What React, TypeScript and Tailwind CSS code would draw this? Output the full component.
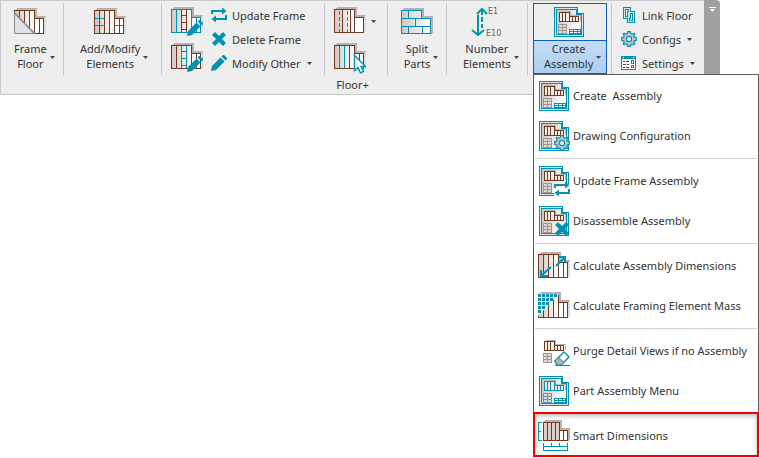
import React from 'react';
import clsx from 'clsx';

const TEAL = '#0091b3';
const BROWN = '#743a20';
const GREY = '#b3b3b3';

type IconProps = { className?: string };

function Defs() {
  return (
    <svg width="0" height="0" className="absolute" aria-hidden="true">
      <defs>
        <linearGradient id="wood" x1="0" y1="0" x2="1" y2="0">
          <stop offset="0" stopColor="#d3c6c1" />
          <stop offset="1" stopColor="#ffffff" />
        </linearGradient>
        <linearGradient id="paper" x1="0" y1="0.3" x2="1" y2="0.7">
          <stop offset="0" stopColor="#c6c6c6" />
          <stop offset="0.8" stopColor="#fafafa" />
        </linearGradient>
      </defs>
    </svg>
  );
}

function Caret({ className }: IconProps) {
  return (
    <svg width="5" height="3" viewBox="0 0 5 3" className={clsx('shrink-0', className)} aria-hidden="true">
      <path d="M0 0h5L2.5 3z" fill="#444" />
    </svg>
  );
}

// Small glyphs, all drawn in a 16x16 box so they can be reused as overlays
function PencilGlyph() {
  return (
    <g fill={TEAL}>
      <path d="M0 16l1-5 8.5-8.5 4 4L5 15z" />
      <path d="M10.5 1.5L12 0h1l3 3v1l-1.5 1.5z" />
    </g>
  );
}

function SwapGlyph() {
  return (
    <g fill="none" stroke={TEAL} strokeWidth="2">
      <path d="M1 7V4h12M15 8v4H3" />
      <path d="M11 .5v7L15.5 4zM5 8.500v7L.5 12z" fill={TEAL} stroke="none" />
    </g>
  );
}

function CrossGlyph() {
  return <path d="M4 1l4 4 4-4 3 3-4 4 4 4-3 3-4-4-4 4-3-3 4-4-4-4z" fill={TEAL} />;
}

function GearGlyph() {
  return (
    <g stroke={TEAL} strokeWidth="1.2">
      <path
        d="M6.7.7L9.3.7 9.8 2.6 11.2 3.2 12.9 2.2 13.8 3.1 12.8 4.8 13.4 6.2 15.3 6.7 15.3 9.3 13.4 9.8 12.8 11.2 13.8 12.9 12.9 13.8 11.2 12.8 9.8 13.4 9.3 15.3 6.7 15.3 6.2 13.4 4.8 12.8 3.1 13.8 2.2 12.9 3.2 11.2 2.6 9.8.7 9.3.7 6.7 2.6 6.2 3.2 4.8 2.2 3.1 3.1 2.2 4.8 3.2 6.2 2.6z"
        fill="#c4c4c4"
      />
      <circle cx="8" cy="8" r="2.6" fill="#fff" />
    </g>
  );
}

function SmallIcon({ children }: { children: React.ReactNode }) {
  return (
    <svg width="16" height="16" viewBox="0 0 16 16" className="shrink-0" aria-hidden="true">
      {children}
    </svg>
  );
}

function LinkGlyph() {
  return (
    <g fill="none" shapeRendering="crispEdges">
      <path d="M3.5 1.5h5v9h-5zM7.5 5.500h5v9h-5z" stroke={TEAL} strokeWidth="3" />
      <path d="M3.5 1.5h5v9h-5zM7.5 5.500h5v9h-5z" stroke="#d4e4e8" strokeWidth="1" />
    </g>
  );
}

function PanelGlyph() {
  return (
    <g fill="none" shapeRendering="crispEdges">
      <path d="M.5 1.5h14v13H.5z" fill="#fff" stroke={TEAL} />
      <path d="M0 1h15v3H0z" fill={TEAL} />
      <path d="M2 2h1v1H2zM12 2h1v1h-1z" fill="#fff" />
      <path d="M2 6.5h2M5 6.5h3M2 9.5h3M6 9.5h2M2 12.5h2M5 12.5h3" stroke={BROWN} />
      <path d="M10.5 5.5h2v3h-2zM10.5 10.5h2v2h-2z" stroke={TEAL} />
    </g>
  );
}

// Floor cassette seen from the front with a grey edge behind it
function FloorShape({
  stroke = BROWN,
  studs = 'M5.5 2v24M10.5 2v24M15.5 2v24M25.5 10v16',
  children,
}: {
  stroke?: string;
  studs?: string;
  children?: React.ReactNode;
}) {
  return (
    <g shapeRendering="crispEdges">
      <path d="M3 0h20v8h9l-2 2h-9V2H1z" fill={GREY} />
      <path d="M30 10l2-2v16l-2 2z" fill="#dcdcdc" />
      <path d="M.5 2.5h20v23H.5z" fill="url(#wood)" stroke={stroke} />
      <path d="M20.5 10.5h9v15h-9z" fill="#fff" stroke={stroke} />
      <path d={studs} stroke={stroke} fill="none" />
      {children}
    </g>
  );
}

function FloorIcon({ height = 28, children }: { height?: number; children: React.ReactNode }) {
  return (
    <svg
      width="32"
      height={height}
      viewBox={`0 0 32 ${height}`}
      className="block shrink-0"
      aria-hidden="true"
    >
      {children}
    </svg>
  );
}

function FrameFloorIcon() {
  return (
    <FloorIcon>
      <FloorShape />
      <path d="M0 4v22h21z" fill="#e0e1e3" />
      <path d="M.5 5v20.5H20z" fill="none" stroke="#888" />
      <path d="M0 4.5L20.5 25.5" stroke="#888" strokeWidth="1.5" />
    </FloorIcon>
  );
}

function AddElementsIcon() {
  return (
    <FloorIcon>
      <FloorShape>
        <path d="M1 10.5h4M6 10.5h4M1 17.5h4M6 17.5h4M21 17.5h4M26 17.5h3" stroke={TEAL} />
      </FloorShape>
    </FloorIcon>
  );
}

function EditFrameIcon() {
  return (
    <FloorIcon height={31}>
      <FloorShape stroke={TEAL} studs="M5.5 2v24M10.5 2v24M25.5 10v16">
        <path d="M10.5 3v22M15.5 3v22M11 8.5h4M11 15.5h4M11 22.5h4" stroke={BROWN} />
      </FloorShape>
      <g transform="translate(16 13)">
        <PencilGlyph />
      </g>
    </FloorIcon>
  );
}

function EditPartIcon() {
  return (
    <FloorIcon height={31}>
      <FloorShape studs="M5.5 2v24M25.5 10v16">
        <path d="M10.5 3v22M15.5 3v22M11 8.5h4M11 15.5h4M11 22.5h4" stroke={TEAL} />
      </FloorShape>
      <g transform="translate(16 13)">
        <PencilGlyph />
      </g>
    </FloorIcon>
  );
}

function CenterLinesIcon() {
  return (
    <FloorIcon>
      <FloorShape studs="M8.500 2v24M16.5 2v24">
        <path d="M5.5 4v21M13.5 4v21" stroke={TEAL} strokeDasharray="4 2" />
      </FloorShape>
    </FloorIcon>
  );
}

function PickStudIcon() {
  return (
    <FloorIcon height={31}>
      <FloorShape studs="M15.5 2v24M25.5 10v16">
        <path d="M5.5 3v22M10.5 3v22" stroke={TEAL} />
      </FloorShape>
      <path
        d="M20.5 12.5v15l3.5-3 2.5 5.5 3-1.5-2.5-5h4.5z"
        fill="#fff"
        stroke={TEAL}
        strokeWidth="1.4"
      />
    </FloorIcon>
  );
}

// Same outline as the floor, laid out as three courses of bricks
function SplitPartsIcon() {
  return (
    <FloorIcon>
      <g shapeRendering="crispEdges" stroke={TEAL}>
        <path d="M3 0h20v8h9v16l-2 2V10h-9V2H1z" fill={GREY} stroke="none" />
        <path d="M.5 2.5h20v8h9v15H.5z" fill="url(#wood)" />
        <path d="M0 10.5h21M0 18.5h30M7.5 2v8M14.5 10v8M7.5 18v8M21.5 18v8" fill="none" />
      </g>
    </FloorIcon>
  );
}

function NumberIcon() {
  return (
    <svg width="32" height="28" viewBox="0 0 32 28" className="block overflow-visible" aria-hidden="true">
      <path d="M7 7v20" stroke={TEAL} strokeWidth="2" />
      <path d="M11 2v18" stroke={TEAL} strokeWidth="2" strokeDasharray="5 2" />
      <path d="M1 22l6 5 6-5M6 6l5-5 5 5" fill="none" stroke={TEAL} strokeWidth="2" />
      <text x="17" y="6" fontSize="8" fill="#84564a" fontFamily="'DejaVu Sans', sans-serif">
        E1
      </text>
      <text x="15" y="28" fontSize="8" fill="#84564a" fontFamily="'DejaVu Sans', sans-serif">
        E10
      </text>
    </svg>
  );
}

// Little plan view and schedule that sit on the drawing sheet
function PlanGlyph({ color = BROWN, table = '#a8948c' }: { color?: string; table?: string }) {
  return (
    <g fill="none" shapeRendering="crispEdges">
      <path d="M7 4h10v4h10v6h-1V9H15V5H6z" fill="#b5b5b5" />
      <path d="M5.5 5.500h10v9h-10zM15.5 9.5h9v5h-9z" fill="#f1eeec" stroke={color} />
      <path d="M8.5 5v10M11.500 5v10M18.5 9v6M21.500 9v6" stroke={color} />
      <path d="M4.5 17.5h8v9h-8zM4 20.5h9M4 23.5h9M8.5 17v10" fill="#dfd8d5" stroke={table} />
    </g>
  );
}

function SheetIcon({
  color = BROWN,
  table,
  overlay,
}: {
  color?: string;
  table?: string;
  overlay?: React.ReactNode;
}) {
  return (
    <svg width="32" height="32" viewBox="-1 -1 32 32" className="block shrink-0" aria-hidden="true">
      <g shapeRendering="crispEdges" fill="none">
        <path d="M.5.5h23l6 6v23H.5z" fill="#e0e6e8" stroke={TEAL} />
        <path d="M2.5 2.5h20v5h5v20h-25z" fill="url(#paper)" stroke={TEAL} />
        <path d="M23.5.5v6h6" fill="#fff" stroke={TEAL} />
      </g>
      <PlanGlyph color={color} table={table} />
      {overlay ? (
        overlay
      ) : (
        <path
          d="M15.5 22.5h11v4h-11zM15 24.5h12M19.5 22v5M23.5 22v5"
          fill="#fff"
          stroke={TEAL}
          shapeRendering="crispEdges"
        />
      )}
    </svg>
  );
}

function GearSheetIcon() {
  return (
    <SheetIcon
      overlay={
        <g transform="translate(15 14)">
          <GearGlyph />
        </g>
      }
    />
  );
}

function SwapSheetIcon() {
  return (
    <SheetIcon
      overlay={
        <g>
          <path d="M15 18h16v13H15z" fill="#fff" />
          <g transform="translate(15 15)">
            <SwapGlyph />
          </g>
        </g>
      }
    />
  );
}

function CrossSheetIcon() {
  return (
    <SheetIcon
      overlay={
        <g transform="translate(15 15)">
          <CrossGlyph />
        </g>
      }
    />
  );
}

function DimensionsIcon() {
  return (
    <FloorIcon>
      <FloorShape />
      <g fill="none" stroke={TEAL} strokeWidth="2">
        <path d="M4 23l9-8M18 14l9-9" />
        <path d="M3 18v6h7M21 5h6v6" />
      </g>
    </FloorIcon>
  );
}

function MassIcon() {
  return (
    <FloorIcon>
      <FloorShape />
      <path d="M0 2h21L0 24z" fill="#fff" />
      <g fill="none" stroke={TEAL} strokeWidth="3" strokeDasharray="3 1" shapeRendering="crispEdges">
        <path d="M0 3.5h20M0 7.5h16M0 11.5h12M0 15.5h8M0 19.5h4" />
      </g>
    </FloorIcon>
  );
}

function PurgeIcon() {
  return (
    <svg width="32" height="32" viewBox="-1 -1 32 32" className="block shrink-0" aria-hidden="true">
      <PlanGlyph />
      <path d="M16 25l9-9 5 5-8 8h-4z" fill="#fff" stroke={TEAL} strokeWidth="1.4" />
      <path d="M16 25l3.500-3.500 5.500 5-3 2.500h-4z" fill={GREY} stroke={TEAL} />
      <path d="M16 29.5h15" stroke={TEAL} />
    </svg>
  );
}

function SmartDimensionsIcon() {
  return (
    <svg width="32" height="32" viewBox="0 0 32 32" className="block shrink-0" aria-hidden="true">
      <g fill="none" stroke={TEAL} shapeRendering="crispEdges">
        <path d="M4 2.5H.5v18H4M1 11.5h2M5.5 23v8M29.5 23v8M5 30.500h25M5 26.5h25M13.5 23v4M21.5 23v4" />
      </g>
      <g shapeRendering="crispEdges">
        <path d="M7 0h17v8h8v11l-2 2V10h-8V2H5z" fill={GREY} />
        <path d="M5.5 2.5h16v18h-16z" fill="#ddd0ca" stroke={BROWN} />
        <path d="M21.5 10.5h8v10h-8z" fill="#fff" stroke={BROWN} />
        <path d="M9.5 2v19M13.5 2v19M17.5 2v19M25.5 10v11" stroke={BROWN} />
      </g>
    </svg>
  );
}

type BigButtonProps = {
  icon: React.ReactNode;
  lines: [string, string];
  className?: string;
  caretClassName?: string;
};

function BigButton({ icon, lines, className, caretClassName = 'ml-[3px]' }: BigButtonProps) {
  return (
    <button type="button" className={clsx('flex items-start pt-[5px] text-left', className)}>
      <span className="flex flex-col items-center">
        {icon}
        <span className="mt-[5px] text-center">
          {lines[0]}
          <br />
          {lines[1]}
        </span>
      </span>
      <Caret className={clsx('mt-12', caretClassName)} />
    </button>
  );
}

function RowButton({ icon, label, menu }: { icon: React.ReactNode; label: string; menu?: boolean }) {
  return (
    <button type="button" className="flex h-6 items-center gap-[5px] whitespace-nowrap">
      <SmallIcon>{icon}</SmallIcon>
      {label}
      {menu && <Caret className="ml-px" />}
    </button>
  );
}

function Group({ className, children }: { className?: string; children: React.ReactNode }) {
  return <div className={clsx('flex h-[72px] border-r border-[#c8c8c8]', className)}>{children}</div>;
}

const menuGroups = [
  [
    { label: 'Create  Assembly', icon: <SheetIcon /> },
    { label: 'Drawing Configuration', icon: <GearSheetIcon /> },
  ],
  [
    { label: 'Update Frame Assembly', icon: <SwapSheetIcon /> },
    { label: 'Disassemble Assembly', icon: <CrossSheetIcon /> },
  ],
  [
    { label: 'Calculate Assembly Dimensions', icon: <DimensionsIcon /> },
    { label: 'Calculate Framing Element Mass', icon: <MassIcon /> },
  ],
  [
    { label: 'Purge Detail Views if no Assembly', icon: <PurgeIcon /> },
    { label: 'Part Assembly Menu', icon: <SheetIcon color={TEAL} table="#5a9fae" /> },
  ],
  [{ label: 'Smart Dimensions', icon: <SmartDimensionsIcon />, marked: true }],
];

function AssemblyMenu() {
  return (
    <div
      role="menu"
      className="absolute top-full left-0 z-10 w-[226px] border border-[#5c5c5c] bg-white px-px pt-px"
    >
      {menuGroups.map((group, i) => (
        <div key={i}>
          {i > 0 && <hr className="mt-0.5 mb-0.5 border-[#d0d0d0]" />}
          {group.map((item) => (
            <button
              key={item.label}
              type="button"
              role="menuitem"
              className="relative flex h-10 w-full items-center gap-[3px] pl-[3px] whitespace-pre"
            >
              {item.icon}
              <span className="pb-0.5">{item.label}</span>
              {'marked' in item && (
                <span className="absolute -inset-x-0.5 -top-1 -bottom-px border-2 border-[#f00000] shadow-[inset_0_2px_4px_#bbb]" />
              )}
            </button>
          ))}
        </div>
      ))}
    </div>
  );
}

function CreateAssembly() {
  return (
    <div className="relative h-[71px] w-[74px]">
      <button
        type="button"
        aria-haspopup="menu"
        aria-expanded="true"
        className="flex h-full w-full flex-col border border-[#0a5fbf]"
      >
        <span className="flex h-[37px] w-full justify-center border-b border-[#0a5fbf] pt-0.5 pr-0.5">
          <SheetIcon />
        </span>
        <span className="flex w-full flex-1 items-start bg-linear-to-b from-[#c5ddf5] to-[#a9cdf0] pl-2.5">
          <span className="text-center">
            Create
            <br />
            Assembly
          </span>
          <Caret className="mt-[15px] ml-[3px]" />
        </span>
      </button>
      <AssemblyMenu />
    </div>
  );
}

function App() {
  return (
    <div className="min-h-screen bg-white font-['Noto_Sans','Open_Sans',sans-serif] text-[11px] leading-[15px] text-[#333]">
      <Defs />
      <div className="flex items-start">
        <section aria-label="Floor+" className="border border-r-0 border-[#c8c8c8] bg-[#eeeeee]">
          <div className="flex pt-0.5">
            <Group className="w-[63px] pl-[13px]">
              <BigButton icon={<FrameFloorIcon />} lines={['Frame', 'Floor']} />
            </Group>
            <Group className="w-[98px] pl-4">
              <BigButton icon={<AddElementsIcon />} lines={['Add/Modify', 'Elements']} />
            </Group>
            <Group className="w-[163px] gap-2 pl-[9px]">
              <div className="flex flex-col gap-[5px] pt-1">
                <button type="button" aria-label="Edit frame">
                  <EditFrameIcon />
                </button>
                <button type="button" aria-label="Edit part">
                  <EditPartIcon />
                </button>
              </div>
              <div>
                <RowButton icon={<SwapGlyph />} label="Update Frame" />
                <RowButton icon={<CrossGlyph />} label="Delete Frame" />
                <RowButton icon={<PencilGlyph />} label="Modify Other" menu />
              </div>
            </Group>
            <Group className="w-[63px] flex-col items-start gap-2 pt-1 pl-[9px]">
              <button type="button" aria-label="Center lines" className="flex items-center gap-[5px]">
                <CenterLinesIcon />
                <Caret />
              </button>
              <button type="button" aria-label="Pick stud">
                <PickStudIcon />
              </button>
            </Group>
            <Group className="w-[59px] pl-[13px]">
              <BigButton icon={<SplitPartsIcon />} lines={['Split', 'Parts']} caretClassName="ml-0" />
            </Group>
            <Group className="w-[81px] pl-4">
              <BigButton icon={<NumberIcon />} lines={['Number', 'Elements']} />
            </Group>
            <Group className="w-[84px] pl-[5px]">
              <CreateAssembly />
            </Group>
            <div className="w-[92px] pl-[9px]">
              <RowButton icon={<LinkGlyph />} label="Link Floor" />
              <RowButton icon={<GearGlyph />} label="Configs" menu />
              <RowButton icon={<PanelGlyph />} label="Settings" menu />
            </div>
          </div>
          <h2 className="h-[19px] pt-0.5 text-center">Floor+</h2>
        </section>
        <button
          type="button"
          aria-label="Ribbon options"
          className="flex h-[95px] w-4 items-start justify-center rounded-tr-sm bg-[#a0a0a0] pt-[7px]"
        >
          <svg width="7" height="5" viewBox="0 0 7 5" aria-hidden="true">
            <path d="M0 0h7v1H0zM1 2h5L3.5 5z" fill="#fff" />
          </svg>
        </button>
      </div>
    </div>
  );
}

export default App;
